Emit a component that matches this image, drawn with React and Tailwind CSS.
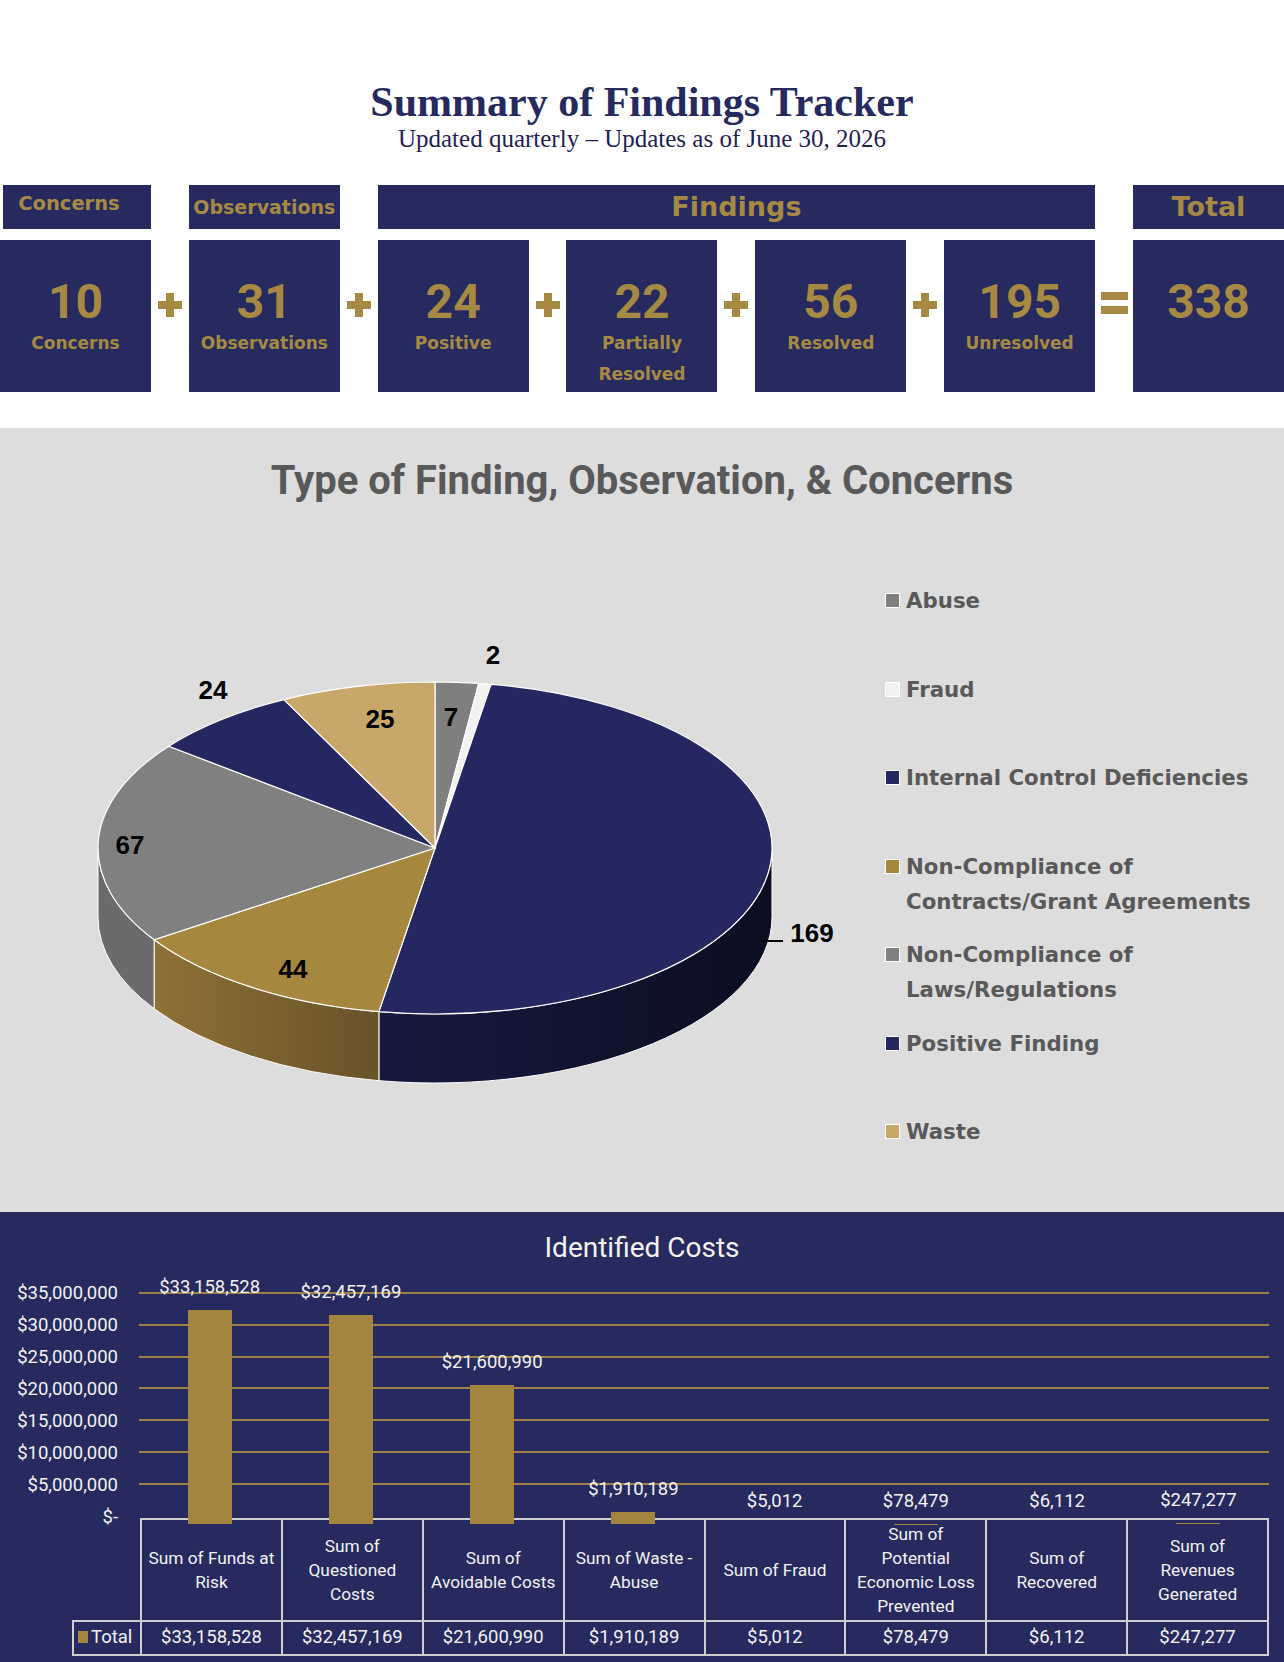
import React from "react";

const counts = [
  { value: 10, label: ["Concerns"] },
  { value: 31, label: ["Observations"] },
  { value: 24, label: ["Positive"] },
  { value: 22, label: ["Partially", "Resolved"] },
  { value: 56, label: ["Resolved"] },
  { value: 195, label: ["Unresolved"] },
];

const slices = [
  { name: "Abuse", v: 7, top: "#7f7f7f", side: "#666666" },
  { name: "Fraud", v: 2, top: "#f2f2f2", side: "#cfcfcf" },
  { name: "Internal Control Deficiencies", v: 169, top: "#252860", side: "url(#gNavy)" },
  { name: "Non-Compliance of Contracts/Grant Agreements", v: 44, top: "#a6873e", side: "url(#gGold)" },
  { name: "Non-Compliance of Laws/Regulations", v: 67, top: "#808080", side: "#6b6b6b" },
  { name: "Positive Finding", v: 24, top: "#252860", side: "#15183a" },
  { name: "Waste", v: 25, top: "#c8a86a", side: "#9c8250" },
];

const legend = [
  { lines: ["Abuse"], color: "bg-[#7f7f7f]" },
  { lines: ["Fraud"], color: "bg-[#f2f2f2]" },
  { lines: ["Internal Control Deficiencies"], color: "bg-[#252860]" },
  { lines: ["Non-Compliance of", "Contracts/Grant Agreements"], color: "bg-[#a6873e]" },
  { lines: ["Non-Compliance of", "Laws/Regulations"], color: "bg-[#808080]" },
  { lines: ["Positive Finding"], color: "bg-[#252860]" },
  { lines: ["Waste"], color: "bg-[#c8a86a]" },
];

const costs = [
  { lines: ["Sum of Funds at", "Risk"], v: 33158528 },
  { lines: ["Sum of", "Questioned", "Costs"], v: 32457169 },
  { lines: ["Sum of", "Avoidable Costs"], v: 21600990 },
  { lines: ["Sum of Waste -", "Abuse"], v: 1910189 },
  { lines: ["Sum of Fraud"], v: 5012 },
  { lines: ["Sum of", "Potential", "Economic Loss", "Prevented"], v: 78479 },
  { lines: ["Sum of", "Recovered"], v: 6112 },
  { lines: ["Sum of", "Revenues", "Generated"], v: 247277 },
];

const axis = ["$35,000,000", "$30,000,000", "$25,000,000", "$20,000,000", "$15,000,000", "$10,000,000", "$5,000,000", "$-"];

const money = (n) => "$" + n.toLocaleString("en-US");

// pie geometry
const cx = 435, cy = 268, rx = 337, ry = 166, depth = 69;
const pt = (deg, dy = 0) => {
  const r = (deg * Math.PI) / 180;
  return `${(cx + rx * Math.sin(r)).toFixed(2)} ${(cy - ry * Math.cos(r) + dy).toFixed(2)}`;
};
const sector = (a, b) => {
  const m = (a + b) / 2;
  return `M ${cx} ${cy} L ${pt(a)} A ${rx} ${ry} 0 0 1 ${pt(m)} A ${rx} ${ry} 0 0 1 ${pt(b)} Z`;
};
const wall = (a, b) =>
  `M ${pt(a)} A ${rx} ${ry} 0 0 1 ${pt(b)} L ${pt(b, depth)} A ${rx} ${ry} 0 0 0 ${pt(a, depth)} Z`;

const total = slices.reduce((s, x) => s + x.v, 0);
let acc = 0;
const arcs = slices.map((s) => {
  const a = (acc / total) * 360;
  acc += s.v;
  const b = (acc / total) * 360;
  return { ...s, a, b };
});

function Plus() {
  return (
    <div className="relative mt-[53px] h-[24px] w-[24px] self-start justify-self-center">
      <div className="absolute left-0 top-[8px] h-[8px] w-[24px] bg-[#a68a44]" />
      <div className="absolute left-[8px] top-0 h-[24px] w-[8px] bg-[#a68a44]" />
    </div>
  );
}

function Equals() {
  return (
    <div className="mt-[52px] flex flex-col gap-[6px] self-start justify-self-center">
      <div className="h-[8px] w-[27px] bg-[#a68a44]" />
      <div className="h-[8px] w-[27px] bg-[#a68a44]" />
    </div>
  );
}

function CountBox({ value, label }) {
  return (
    <div className="flex h-[152px] flex-col items-center bg-[#262a5e] pt-[38px] text-[#a68a44]">
      <div className="font-['Roboto',sans-serif] text-[48px] font-bold leading-[48px]">{value}</div>
      <div className="mt-[2px] text-center font-['DejaVu_Sans',sans-serif] text-[17px] font-bold leading-[31px]">
        {label.map((l) => (
          <div key={l}>{l}</div>
        ))}
      </div>
    </div>
  );
}

function Pie() {
  return (
    <svg width="885" height="560" viewBox="0 0 885 560" className="shrink-0">
      <defs>
        <linearGradient id="gNavy" x1="0" x2="1" y1="0" y2="0">
          <stop offset="0" stopColor="#171a3f" />
          <stop offset="1" stopColor="#0b0d21" />
        </linearGradient>
        <linearGradient id="gGold" x1="0" x2="1" y1="0" y2="0">
          <stop offset="0" stopColor="#8e7136" />
          <stop offset="1" stopColor="#685228" />
        </linearGradient>
      </defs>
      {arcs.map((s) => {
        const a = Math.max(s.a, 90);
        const b = Math.min(s.b, 270);
        if (b <= a) return null;
        return <path key={"w" + s.name} d={wall(a, b)} fill={s.side} stroke="#ffffff" strokeWidth="1" />;
      })}
      {arcs.map((s) => (
        <path key={s.name} d={sector(s.a, s.b)} fill={s.top} stroke="#ffffff" strokeWidth="1.2" />
      ))}
      <line x1="761" y1="361" x2="783" y2="361" stroke="#000000" strokeWidth="2" />
      <g fontFamily="'Liberation Sans', Arial, sans-serif" fontWeight="700" fontSize="26" fill="#000000" textAnchor="middle" dominantBaseline="central">
        <text x="493" y="75">2</text>
        <text x="213" y="110">24</text>
        <text x="380" y="139">25</text>
        <text x="451" y="137">7</text>
        <text x="130" y="265">67</text>
        <text x="293" y="389">44</text>
        <text x="812" y="353">169</text>
      </g>
    </svg>
  );
}

export default function App() {
  return (
    <div className="w-[1284px] overflow-hidden bg-white">
      {/* header */}
      <div className="h-[428px]">
        <h1 className="pt-[79px] text-center font-['Liberation_Serif','Times_New_Roman',serif] text-[42px] font-bold leading-[46px] text-[#262a5e]">
          Summary of Findings Tracker
        </h1>
        <p className="text-center font-['Liberation_Serif','Times_New_Roman',serif] text-[25px] leading-[28px] text-[#1f2352]">
          Updated quarterly – Updates as of June 30, 2026
        </p>
        <div className="mt-[32px] grid grid-cols-[151px_1fr_151px_1fr_151px_1fr_151px_1fr_151px_1fr_151px_1fr_151px] gap-y-[11px] font-['DejaVu_Sans',sans-serif] font-bold text-[#a68a44]">
          <div className="col-start-1 ml-[3px] flex h-[44px] justify-center bg-[#262a5e] pr-[16px] pt-[5px] text-[19.5px] leading-[28px]">
            Concerns
          </div>
          <div className="col-start-3 flex h-[44px] items-center justify-center bg-[#262a5e] text-[19px]">
            Observations
          </div>
          <div className="col-start-5 col-end-12 flex h-[44px] items-center justify-center bg-[#262a5e] text-[27px]">
            Findings
          </div>
          <div className="col-start-13 flex h-[44px] items-center justify-center bg-[#262a5e] text-[27px]">
            Total
          </div>

          {counts.map((c, i) => (
            <React.Fragment key={c.value}>
              <CountBox value={c.value} label={c.label} />
              {i < counts.length - 1 ? <Plus /> : <Equals />}
            </React.Fragment>
          ))}
          <CountBox value={338} label={[]} />
        </div>
      </div>

      {/* pie chart */}
      <div className="h-[784px] bg-[#dddddd]">
        <h2 className="pt-[30px] text-center font-['Roboto',sans-serif] text-[40px] font-bold leading-[46px] text-[#595959]">
          Type of Finding, Observation, &amp; Concerns
        </h2>
        <div className="mt-[76px] flex">
          <Pie />
          <ul className="pt-[3px] font-['DejaVu_Sans',sans-serif] text-[21.3px] font-bold leading-[35px] text-[#595959]">
            {legend.map((l) => (
              <li key={l.lines.join()} className="flex h-[88.5px] items-start">
                <span className={`mt-[10px] h-[15px] w-[15px] shrink-0 border border-white ${l.color}`} />
                <span className="ml-[6px] whitespace-nowrap">
                  {l.lines.map((t) => (
                    <div key={t}>{t}</div>
                  ))}
                </span>
              </li>
            ))}
          </ul>
        </div>
      </div>

      {/* identified costs */}
      <div className="h-[450px] bg-[#262a5e] pt-[20px] font-['Roboto',sans-serif] text-[#f2f2f2]">
        <h3 className="text-center text-[28px] leading-[32px]">Identified Costs</h3>
        <div className="mt-[13px] flex">
          <div className="h-[241px] w-[139px] pr-[21px] text-right text-[18.5px]">
            {axis.map((a) => (
              <div key={a} className="h-[32px] whitespace-nowrap leading-[32px]">
                {a}
              </div>
            ))}
          </div>
          <div className="relative h-[241px] w-[1130px]">
            <div className="absolute left-0 right-0 top-[15px] flex h-[193px] flex-col justify-between">
              {axis.slice(0, 7).map((a) => (
                <div key={a} className="h-[2px] bg-[#a08046]" />
              ))}
            </div>
            <div className="relative grid h-full grid-cols-8 items-end">
              {costs.map((c) => (
                <div key={c.v} className="flex flex-col items-center">
                  <div className="mb-[13px] text-[18.5px] leading-[20px]">{money(c.v)}</div>
                  <div className="w-[44px] bg-[#a3853f]" style={{ height: (c.v / 35000000) * 226 }} />
                </div>
              ))}
            </div>
          </div>
        </div>
        <table className="ml-[72px] w-[1197px] table-fixed border-collapse text-center">
          <colgroup>
            <col className="w-[68px]" />
            {costs.map((c) => (
              <col key={c.v} />
            ))}
          </colgroup>
          <tbody>
            <tr className="h-[102px]">
              <td />
              {costs.map((c) => (
                <td key={c.v} className="whitespace-nowrap border-2 border-[#cfcfcf] text-[17.3px] leading-[24px]">
                  {c.lines.map((l) => (
                    <div key={l}>{l}</div>
                  ))}
                </td>
              ))}
            </tr>
            <tr className="h-[34px] text-[18.5px]">
              <td className="whitespace-nowrap border-2 border-[#cfcfcf] pl-[4px] text-left">
                <span className="mr-[3px] inline-block h-[12px] w-[10px] bg-[#a3853f]" />
                Total
              </td>
              {costs.map((c) => (
                <td key={c.v} className="border-2 border-[#cfcfcf]">
                  {money(c.v)}
                </td>
              ))}
            </tr>
          </tbody>
        </table>
      </div>
    </div>
  );
}
